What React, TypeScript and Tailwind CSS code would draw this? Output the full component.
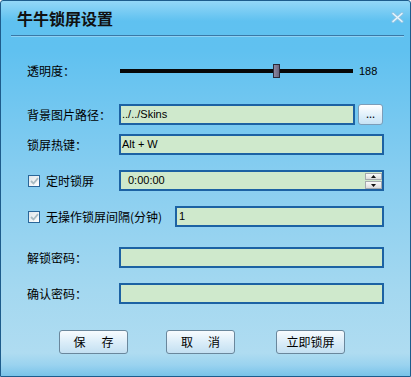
import React from 'react';

const cjk = "font-['Noto_Sans_CJK_SC','Noto_Sans',sans-serif]";
const latin = "font-['Liberation_Sans','Noto_Sans_CJK_SC',sans-serif]";

const Field: React.FC<{ value?: string; className?: string; children?: React.ReactNode }> = ({ value, className = '', children }) => (
  <div
    className={`relative flex h-[21px] items-center border-2 border-[#1c62a3] bg-[#cfe9cc] text-[11px] text-black ${latin} ${className}`}
  >
    {value}
    {children}
  </div>
);

const CheckBox: React.FC = () => (
  <div className="flex h-[12px] w-[12px] items-center justify-center border border-[#2a6699] bg-[linear-gradient(135deg,#dfe6ea,#ffffff)]">
    <svg width="9" height="8" viewBox="0 0 9 8">
      <path d="M1 4 L3.5 6.5 L8 1.2" fill="none" stroke="#a9bcc3" strokeWidth="1.8" />
    </svg>
  </div>
);

const Btn: React.FC<{ children: React.ReactNode; className?: string }> = ({ children, className = '' }) => (
  <button
    className={`flex h-[24px] w-[69px] items-center justify-center rounded-[3px] border border-[#6a879c] bg-[linear-gradient(to_bottom,#f7fbfe,#d9ecf8_55%,#c4e0f2)] text-[12px] text-black ${cjk} ${className}`}
  >
    {children}
  </button>
);

export default function App() {
  return (
    <div className="h-[377px] w-[411px] bg-white">
      <div className="flex h-[377px] w-[411px] flex-col rounded-t-[3px] border border-[#1d5c8c] bg-[linear-gradient(to_bottom,#93d7f7_0px,#5fc1f0_20px,#60c1f0_50px,#86cdf0_170px,#a4d8f0_290px,#afdcf1_352px,#9ad3ef_364px,#79c3e9_375px)]">
        {/* title bar */}
        <div className="flex h-[34px] items-center justify-between pl-[16px] pr-[6px]">
          <span className={`text-[16px] font-bold text-[#111] ${cjk}`}>牛牛锁屏设置</span>
          <svg width="13" height="11" viewBox="0 0 13 11" className="mt-[-2px]">
            <path d="M2 1.5 L11 9.5 M11 1.5 L2 9.5" stroke="#8ec3e3" strokeWidth="3.2" strokeLinecap="round" />
            <path d="M2 1.5 L11 9.5 M11 1.5 L2 9.5" stroke="#e8f6fd" strokeWidth="1.4" strokeLinecap="round" />
          </svg>
        </div>
        <div className="ml-[10px] mr-[6px] h-[2px] border-t border-[#3a78a6] border-b border-b-[#8fd2f4]" />

        <div className={`flex flex-col pl-[26px] pr-[26px] text-[12px] text-black ${cjk}`}>
          {/* slider */}
          <div className="mt-[27px] flex h-[14px] items-center">
            <span className="w-[93px]">透明度：</span>
            <div className="relative flex h-[14px] w-[233px] items-center">
              <div className="h-[4px] w-full bg-[#080808]" />
              <div className="absolute left-[153px] top-0 h-[14px] w-[7px] border border-[#2b2838] bg-[linear-gradient(to_right,#8c87a0,#6a6580)]" />
            </div>
            <span className={`ml-[6px] text-[11px] ${latin}`}>188</span>
          </div>

          {/* background path */}
          <div className="mt-[26px] flex h-[21px] items-center">
            <span className="w-[92px]">背景图片路径：</span>
            <Field value="../../Skins" className="w-[236px] pl-[1px]" />
            <button className="ml-[3px] flex h-[21px] w-[25px] items-start justify-center rounded-[3px] border border-[#7d9db8] bg-[linear-gradient(to_bottom,#ffffff,#dceefa_60%,#c8e3f5)] pt-[1px] text-[11px] leading-[14px] text-black">
              ...
            </button>
          </div>

          {/* hotkey */}
          <div className="mt-[9px] flex h-[21px] items-center">
            <span className="w-[92px]">锁屏热键：</span>
            <Field value="Alt + W" className="flex-1 pl-[1px]" />
          </div>

          {/* timed lock */}
          <div className="mt-[15px] flex h-[21px] items-center">
            <div className="flex w-[92px] items-center gap-[6px] pl-[1px]">
              <CheckBox />
              <span>定时锁屏</span>
            </div>
            <Field value="0:00:00" className="flex-1 pl-[7px]">
              <div className="absolute right-[0px] top-[1px] flex flex-col gap-[1px]">
                <div className="flex h-[7px] w-[17px] items-center justify-center border border-[#a5a9ad] bg-[linear-gradient(to_bottom,#fafafa,#dcdcdc)]">
                  <svg width="5" height="3" viewBox="0 0 5 3"><path d="M0 3 L2.5 0 L5 3Z" fill="#111" /></svg>
                </div>
                <div className="flex h-[8px] w-[17px] items-center justify-center border border-[#a5a9ad] bg-[linear-gradient(to_bottom,#fafafa,#dcdcdc)]">
                  <svg width="5" height="3" viewBox="0 0 5 3"><path d="M0 0 L2.5 3 L5 0Z" fill="#111" /></svg>
                </div>
              </div>
            </Field>
          </div>

          {/* idle interval */}
          <div className="mt-[15px] flex h-[21px] items-center">
            <div className="flex w-[148px] items-center gap-[6px] pl-[1px]">
              <CheckBox />
              <span>无操作锁屏间隔(分钟)</span>
            </div>
            <Field value="1" className="flex-1 pl-[2px]" />
          </div>

          {/* unlock password */}
          <div className="mt-[20px] flex h-[21px] items-center">
            <span className="w-[92px]">解锁密码：</span>
            <Field className="flex-1" />
          </div>

          {/* confirm password */}
          <div className="mt-[15px] flex h-[21px] items-center">
            <span className="w-[92px]">确认密码：</span>
            <Field className="flex-1" />
          </div>
        </div>

        {/* buttons */}
        <div className="mt-[26px] flex pl-[58px]">
          <Btn className="gap-[16px]">
            <span>保</span>
            <span>存</span>
          </Btn>
          <Btn className="ml-[38px] gap-[15px]">
            <span>取</span>
            <span>消</span>
          </Btn>
          <Btn className="ml-[41px]">立即锁屏</Btn>
        </div>
      </div>
    </div>
  );
}
